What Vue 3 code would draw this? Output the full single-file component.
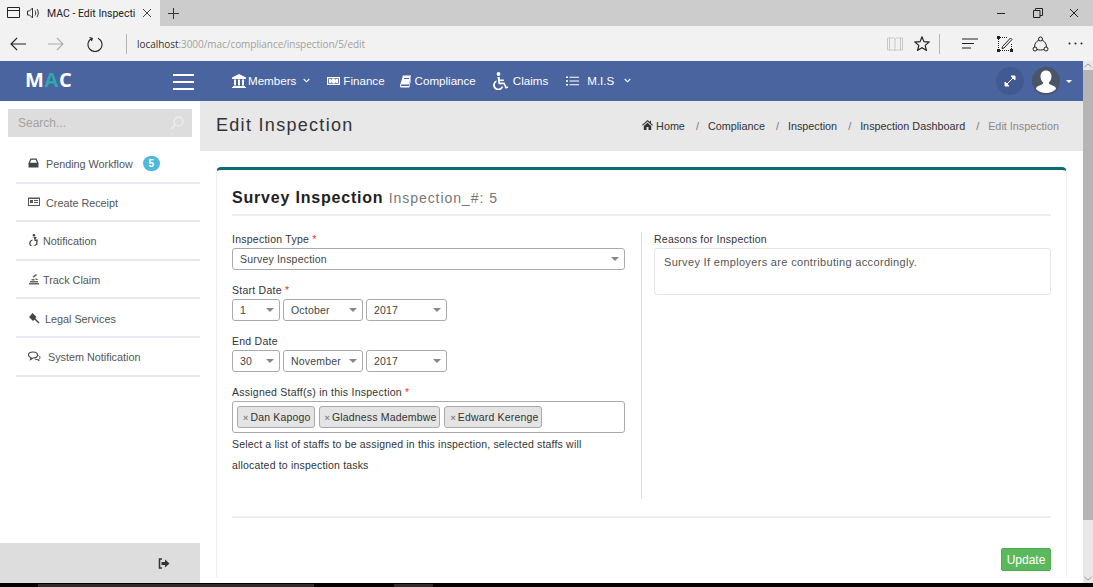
<template>
  <div class="screen">
    <div class="tabbar">
      <div class="tab">
        <svg class="tab-ico" width="16" height="14" viewBox="0 0 16 14"><path d="M1.5 1.5h12v10h-12zM1.5 4.5h12" fill="none" stroke="#222" stroke-width="1"/></svg>
        <svg class="tab-ico" width="15" height="14" viewBox="0 0 15 14"><path d="M1.5 5h2l3-3v10l-3-3h-2zM9 4.5c1 1.5 1 3.5 0 5M11 3c1.7 2.3 1.7 5.700 0 8" fill="none" stroke="#333" stroke-width="1"/></svg>
        <span class="tab-title">MAC - Edit Inspecti</span>
        <svg width="10" height="10" viewBox="0 0 10 10"><path d="M1 1l8 8M9 1l-8 8" stroke="#444" stroke-width="1"/></svg>
      </div>
      <svg class="plus" width="11" height="11" viewBox="0 0 11 11"><path d="M5.5 0v11M0 5.5h11" stroke="#333" stroke-width="1"/></svg>
      <div class="win-btns">
        <svg width="10" height="10" viewBox="0 0 10 10"><path d="M1 5.5h8" stroke="#222" stroke-width="1"/></svg>
        <svg width="10" height="10" viewBox="0 0 10 10"><path d="M.5 2.5h6.5v7h-6.5zM2.5 2.500v-2h7v7h-2.500" fill="none" stroke="#222" stroke-width="1"/></svg>
        <svg width="10" height="10" viewBox="0 0 10 10"><path d="M1 1l8 8M9 1l-8 8" stroke="#222" stroke-width="1"/></svg>
      </div>
    </div>

    <div class="toolbar">
      <svg class="tool back" width="16" height="14" viewBox="0 0 16 14"><path d="M7 1L1 7l6 6M1 7h15" fill="none" stroke="#222" stroke-width="1.100"/></svg>
      <svg class="tool fwd" width="16" height="14" viewBox="0 0 16 14"><path d="M9 1l6 6-6 6M15 7H0" fill="none" stroke="#aaa" stroke-width="1.100"/></svg>
      <svg class="tool reload" width="16" height="16" viewBox="0 0 16 16"><path d="M5 2.200A7 7 0 1 0 11 2.200M2.500 1.500L5.300 2.300 4.500 5" fill="none" stroke="#222" stroke-width="1.100"/></svg>
      <span class="tool-sep"></span>
      <div class="url"><b>localhost</b>:3000/mac/compliance/inspection/5/edit</div>
      <svg class="reader" width="16" height="14" viewBox="0 0 16 14"><path d="M.5 1h6l1.500 1 1.500-1h6v12h-6l-1.500 .5-1.500-.5h-6zM8 2v11M2.500 1v12M13.500 1v12" fill="none" stroke="#c8c8c8" stroke-width="1"/></svg>
      <svg class="star" width="16" height="15" viewBox="0 0 16 15"><path d="M8 1l2 4.700 5 .4-3.800 3.300 1.200 4.900L8 11.700l-4.400 2.600 1.200-4.900L1 6.100l5-.4z" fill="none" stroke="#222" stroke-width="1.200"/></svg>
      <span class="tool-sep right"></span>
      <svg class="hub" width="16" height="11" viewBox="0 0 16 11"><path d="M0 1h16M0 5.500h12M0 10h9" stroke="#222" stroke-width="1"/></svg>
      <svg class="note" width="16" height="16" viewBox="0 0 16 16"><path d="M3 1.500h8M3 14.500h10M1.500 3v10M14.500 8v5" fill="none" stroke="#222" stroke-width="1" stroke-dasharray="1 1"/><path d="M0 0h3v3H0zM0 13h3v3H0zM13 13h3v3h-3z" fill="#222"/><path d="M5.500 10.500l8-8.500 1.500 1.500-8 8.500-2 .5z" fill="#f2f2f2" stroke="#222" stroke-width="1"/></svg>
      <svg class="share" width="17" height="16" viewBox="0 0 17 16"><circle cx="8.500" cy="3" r="2" fill="none" stroke="#222"/><circle cx="3" cy="13" r="2" fill="none" stroke="#222"/><circle cx="14" cy="13" r="2" fill="none" stroke="#222"/><path d="M6.800 4.200C4 5.500 2.500 8 2.500 11M10.200 4.200c2.800 1.300 4.300 3.800 4.300 6.800M5 13.500c2 .7 5 .7 7 0" fill="none" stroke="#222"/></svg>
      <svg class="more" width="15" height="3" viewBox="0 0 15 3"><circle cx="1.500" cy="1.500" r="1" fill="#222"/><circle cx="7.500" cy="1.500" r="1" fill="#222"/><circle cx="13.500" cy="1.500" r="1" fill="#222"/></svg>
    </div>

    <div class="viewport">
      <div class="page">
        <header class="navbar">
          <div class="logo">M<span>A</span>C</div>
          <div class="burger"><i></i><i></i><i></i></div>
          <nav class="nav">
            <a v-for="item in navItems" :key="item.label" class="nav-item" :class="item.cls">
              <svg :width="item.w" :height="item.h || 14" :viewBox="`0 0 ${item.w} ${item.h || 14}`" v-html="item.icon"></svg>
              <span>{{ item.label }}</span>
              <svg v-if="item.caret" class="chev" width="7" height="5" viewBox="0 0 7 5"><path d="M.7 1l2.800 2.800L6.300 1" fill="none" stroke="#fff" stroke-width="1.100"/></svg>
            </a>
          </nav>
          <div class="nav-right">
            <div class="round expand">
              <svg width="12" height="12" viewBox="0 0 12 12"><path d="M7 1h4v4zM1 7v4h4zM9 3L3 9" fill="#fff" stroke="#fff" stroke-width="1"/></svg>
            </div>
            <div class="round avatar">
              <svg width="28" height="28" viewBox="0 0 28 28"><path d="M14 3.500c3.500 0 5.500 2.700 5.500 6 0 2.500-1.200 4.800-2.700 6 0 1.500 1 2 3.700 3 2.500 1 3.500 1.800 3.500 3.500-2.500 2.500-6 4-10 4s-7.500-1.500-10-4c0-1.700 1-2.500 3.500-3.500 2.700-1 3.700-1.500 3.700-3-1.500-1.200-2.700-3.500-2.700-6 0-3.300 2-6 5.500-6z" fill="#fff"/></svg>
            </div>
            <span class="caret-white"></span>
          </div>
        </header>

        <div class="body">
          <aside class="sidebar">
            <div class="search">
              <span>Search...</span>
              <svg width="14" height="14" viewBox="0 0 14 14"><circle cx="8.500" cy="5.500" r="4.500" fill="none" stroke="#f2f2f2" stroke-width="1.200"/><path d="M5.200 8.800L1 13" stroke="#f2f2f2" stroke-width="1.200"/></svg>
            </div>
            <ul class="menu">
              <li v-for="m in menu" :key="m.label" :style="{ gap: m.gap + 'px' }">
                <svg width="13" height="12" viewBox="0 0 13 12" v-html="m.icon"></svg>
                <span>{{ m.label }}</span>
                <em v-if="m.badge" class="badge">{{ m.badge }}</em>
              </li>
            </ul>
            <div class="side-foot">
              <svg width="12" height="11" viewBox="0 0 12 11"><path d="M4 1H1.500v9H4" fill="none" stroke="#333" stroke-width="1.500"/><path d="M3.500 4h3.500V1.500L11.500 5.500 7 9.500V7H3.500z" fill="#333"/></svg>
            </div>
          </aside>

          <main class="content">
            <div class="page-head">
              <h1>Edit Inspection</h1>
              <ol class="crumbs">
                <li>
                  <svg width="11" height="10" viewBox="0 0 11 10"><path d="M5.500 0L0 5l.7.700L5.500 1.500l4.800 4.200.7-.7-2-1.800V.7H8v1.300zM1.800 6L5.500 2.800 9.200 6v4H6.500V7h-2v3H1.800z" fill="#333"/></svg>
                  Home
                </li>
                <li v-for="c in crumbs" :key="c"><i>/</i>{{ c }}</li>
                <li class="active"><i>/</i>Edit Inspection</li>
              </ol>
            </div>

            <section class="card">
              <h2>Survey Inspection <small>Inspection_#: 5</small></h2>
              <div class="columns">
                <div class="col-left">
                  <div class="field">
                    <label>Inspection Type <b>*</b></label>
                    <div class="select wide">Survey Inspection</div>
                  </div>
                  <div v-for="d in dates" :key="d.label" class="field">
                    <label>{{ d.label }} <b v-if="d.required">*</b></label>
                    <div class="date-row">
                      <div class="select day">{{ d.day }}</div>
                      <div class="select month">{{ d.month }}</div>
                      <div class="select year">{{ d.year }}</div>
                    </div>
                  </div>
                  <div class="field staff">
                    <label>Assigned Staff(s) in this Inspection <b>*</b></label>
                    <div class="tags">
                      <span v-for="s in staff" :key="s" class="tag"><i>×</i>{{ s }}</span>
                    </div>
                    <p class="help">Select a list of staffs to be assigned in this inspection, selected staffs will allocated to inspection tasks</p>
                  </div>
                </div>
                <div class="col-right">
                  <label>Reasons for Inspection</label>
                  <div class="textarea">Survey If employers are contributing accordingly.</div>
                </div>
              </div>
              <div class="actions">
                <button type="button">Update</button>
              </div>
            </section>
          </main>
        </div>
      </div>

      <div class="scrollbar">
        <svg width="8" height="5" viewBox="0 0 8 5"><path d="M.5 4L4 1l3.500 3" fill="none" stroke="#999"/></svg>
        <div class="thumb"></div>
        <svg width="8" height="5" viewBox="0 0 8 5"><path d="M.5 1L4 4l3.500-3" fill="none" stroke="#999"/></svg>
      </div>
    </div>
    <div class="taskbar">
      <span class="task-a"></span>
      <span class="task-b"></span>
    </div>
  </div>
</template>

<script setup>
const navItems = [
  {
    label: 'Members', w: 14, caret: true, cls: 'members',
    icon: '<path d="M7 0l7 3.500V5H0V3.500zM1 12h12v1H1zM0 13h14v1H0zM2 5.500h2v6H2zM6 5.500h2v6H6zM10 5.500h2v6h-2z" fill="#fff"/>',
  },
  {
    label: 'Finance', w: 13, cls: 'finance',
    icon: '<path fill-rule="evenodd" d="M0 3h13v8H0zM1.200 4.200v5.600h10.600V4.200zM6.500 4.500a2.500 2.500 0 1 1 0 5 2.500 2.500 0 0 1 0-5zM2 5h2v4H2zM9 5h2v4H9z" fill="#fff"/>',
  },
  {
    label: 'Compliance', w: 11, cls: 'compliance',
    icon: '<path fill-rule="evenodd" d="M3 1.500h8L9 10.500H1.500c-.8 0-.9 1.500 0 1.500H9l1.500-7 .5 .5-1.700 8H1.500C.2 13.500-.3 12 .2 10.500zM4 4v1h5V4z" fill="#fff"/>',
  },
  {
    label: 'Claims', w: 16, h: 18, cls: 'claims',
    icon: '<circle cx="6.500" cy="2" r="1.900" fill="#fff"/><path d="M5.500 5h2.200l.2 2.500h4v1.500H8l.2 1.500h4.300l2 4.300 1.300-.5.600 1.300-2.800 1.100-2-4.500H6.500zM4.500 8.300v1.700a3.600 3.600 0 1 0 5.500 3.800l1 1.500A5.200 5.200 0 1 1 4.500 8.300z" fill="#fff"/>',
  },
  {
    label: 'M.I.S', w: 13, caret: true, cls: 'mis',
    icon: '<path d="M0 2.500h2v1.500H0zM0 6.250h2v1.500H0zM0 10h2v1.500H0zM3.500 2.800H13v1H3.500zM3.500 6.500H13v1H3.500zM3.500 10.300H13v1H3.500z" fill="#fff"/>',
  },
]

const menu = [
  {
    label: 'Pending Workflow', gap: 5, badge: 5,
    icon: '<path fill-rule="evenodd" d="M2.500 1.500h6l2 4.500v4.500H.5V6zM3.300 2.800L2 5.800h7L7.700 2.800z" fill="#444"/>',
  },
  {
    label: 'Create Receipt', gap: 5,
    icon: '<path fill-rule="evenodd" d="M0 1.500h12v8.500H0zM1 3v6h10V3zM2 4h3v3H2zM6 4h4v1H6zM6 6h4v1H6z" fill="#555"/>',
  },
  {
    label: 'Notification', gap: 2,
    icon: '<circle cx="6" cy="1.300" r="1.300" fill="#444"/><path d="M3.500 3h5v1L7 5.500h2.800L9.300 11H8l.3-4H6.500L6 3.500zM4.500 5.500v1.300a2.600 2.600 0 1 0 3 3.200l.7.800A3.700 3.700 0 1 1 4.500 5.500z" fill="#444"/>',
  },
  {
    label: 'Track Claim', gap: 2,
    icon: '<path d="M1 10h10v1.500H1zM2 8h8v1.500H2zM3.500 6h3v1.500h-3zM4.500 3.500L8 1l1 1.200-3.500 2.600zM7.500 5l3 2h-3z" fill="#666"/>',
  },
  {
    label: 'Legal Services', gap: 4,
    icon: '<path d="M4.500 1L8.500 5 7 6.500 3 2.500zM1 5l3-3 4 4-3 3zM7 6l4.500 4.500-1 1L6 7z" fill="#444"/>',
  },
  {
    label: 'System Notification', gap: 7,
    icon: '<path d="M5 2c2.500 0 4.500 1.300 4.500 3S7.500 8 5 8L2.500 9.500l.5-2C1.500 7 .5 6 .5 5 .5 3.300 2.500 2 5 2z" fill="none" stroke="#444" stroke-width="1.100"/><path d="M10.500 5.500c1 .5 1.500 1.200 1.500 2 0 .8-.5 1.500-1.300 1.900l.4 1.300-2-1.200c-1 0-1.800-.2-2.400-.6" fill="none" stroke="#444" stroke-width="1"/>',
  },
]

const crumbs = ['Compliance', 'Inspection', 'Inspection Dashboard']

const dates = [
  { label: 'Start Date', required: true, day: '1', month: 'October', year: '2017' },
  { label: 'End Date', required: false, day: '30', month: 'November', year: '2017' },
]

const staff = ['Dan Kapogo', 'Gladness Madembwe', 'Edward Kerenge']
</script>

<style>
html, body { margin: 0; overflow: hidden; background: #fff; }
</style>

<style scoped>
.screen {
  width: 1093px;
  height: 587px;
  display: flex;
  flex-direction: column;
  overflow: hidden;
  font-family: "Liberation Sans", Arial, sans-serif;
  font-size: 11px;
  color: #333;
}

/* browser chrome */
.tabbar {
  height: 26px;
  flex: none;
  background: #cccccc;
  display: flex;
  align-items: center;
}
.tab {
  width: 160px;
  height: 26px;
  background: #f2f2f2;
  display: flex;
  align-items: center;
  padding-left: 6px;
  box-sizing: border-box;
}
.tab-ico { margin-right: 4px; flex: none; }
.tab-title {
  font-family: Roboto, sans-serif;
  font-size: 10.500px;
  color: #222;
  width: 89px;
  margin: 0 6px 0 2px;
  white-space: nowrap;
}
.plus { margin-left: 8px; }
.win-btns {
  margin-left: auto;
  display: flex;
  gap: 26.500px;
  padding-right: 14px;
}
.toolbar {
  height: 35px;
  flex: none;
  background: #f2f2f2;
  display: flex;
  align-items: center;
}
.back { margin-left: 10px; }
.fwd { margin-left: 22px; }
.reload { margin-left: 23px; }
.tool-sep {
  width: 1px;
  height: 20px;
  background: #b4b4b4;
  margin-left: 23px;
}
.url {
  margin-left: 10px;
  font-family: "Open Sans", sans-serif;
  font-size: 10px;
  letter-spacing: -0.05px;
  color: #a0a0a0;
}
.url b { font-weight: 400; color: #333; }
.reader { margin-left: auto; }
.star { margin-left: 11px; }
.tool-sep.right { margin-left: 9px; }
.hub { margin-left: 22px; }
.note { margin-left: 19px; }
.share { margin-left: 19px; }
.more { margin-left: 19px; margin-right: 10px; }

.viewport {
  height: 522px;
  flex: none;
  display: flex;
}
.page {
  width: 1083px;
  display: flex;
  flex-direction: column;
}
.scrollbar {
  width: 10px;
  background: #e8e8e8;
  display: flex;
  flex-direction: column;
  align-items: center;
}
.scrollbar svg { flex: none; margin: 2px 0; }
.thumb {
  width: 10px;
  height: 451px;
  background: #b5b5b5;
  margin-bottom: 54px;
}
.taskbar {
  flex: 1;
  background: #000;
  display: flex;
  padding-top: 1px;
}
.task-a {
  width: 276px;
  margin-left: 38px;
  background: #2d2d2d;
}
.task-b {
  width: 39px;
  margin-left: 80px;
  background: #2d2d2d;
}

/* navbar */
.navbar {
  height: 40px;
  flex: none;
  background: #4a64a0;
  display: flex;
  align-items: center;
  color: #fff;
}
.logo {
  font-family: "Open Sans", sans-serif;
  font-size: 20px;
  font-weight: 700;
  letter-spacing: 0.6px;
  width: 148px;
  padding-left: 25px;
  margin-top: -4px;
  box-sizing: border-box;
}
.logo span { color: #2fa8b0; }
.burger {
  width: 21px;
  display: flex;
  flex-direction: column;
  gap: 5px;
  margin-left: 25px;
  margin-top: 1px;
}
.burger i { display: block; height: 2px; background: #fff; }
.nav {
  display: flex;
  align-items: center;
  margin-left: 38px;
  margin-top: -1px;
  font-size: 11.600px;
}
.nav-item {
  display: flex;
  align-items: center;
  white-space: nowrap;
}
.nav-item.members { gap: 2px; margin-right: 17.500px; }
.nav-item.finance { gap: 3px; margin-right: 15px; }
.nav-item.compliance { gap: 4px; margin-right: 16px; }
.nav-item.claims { gap: 5px; margin-right: 18px; }
.nav-item.mis { gap: 8px; }
.chev { margin-left: 4.500px; }
.mis .chev { margin-left: 2px; }
.nav-right {
  margin-left: auto;
  display: flex;
  align-items: center;
  padding-right: 11px;
}
.round {
  width: 28px;
  height: 28px;
  border-radius: 50%;
  display: flex;
  align-items: center;
  justify-content: center;
  overflow: hidden;
  margin-top: -1px;
}
.expand { background: #415a91; margin-right: 8px; }
.avatar { background: #4a5568; }
.caret-white {
  margin-left: 6px;
  border-left: 3.500px solid transparent;
  border-right: 3.500px solid transparent;
  border-top: 3.500px solid #fff;
}

/* sidebar */
.body {
  flex: 1;
  display: flex;
  min-height: 0;
}
.sidebar {
  width: 200px;
  flex: none;
  background: #fff;
  display: flex;
  flex-direction: column;
}
.search {
  height: 28px;
  margin: 8px 8px 8px;
  background: #dddddd;
  display: flex;
  align-items: center;
  justify-content: space-between;
  padding: 0 8px 0 10px;
  font-size: 12px;
  color: #a3a3a3;
}
.menu {
  list-style: none;
  margin: 0 0 0 16px;
  padding: 0;
}
.menu li {
  height: 36.600px;
  box-sizing: content-box;
  border-bottom: 2px solid #e8e8ee;
  display: flex;
  align-items: center;
  padding-left: 12px;
  font-size: 10.800px;
  color: #555;
}
.menu li span { position: relative; top: 1px; }
.menu li svg { flex: none; }
.badge {
  font-style: normal;
  font-weight: 700;
  font-size: 10px;
  color: #fff;
  background: #4fb8dc;
  border-radius: 8px;
  width: 17px;
  height: 15px;
  line-height: 15px;
  text-align: center;
  margin-left: 5px;
}
.side-foot {
  margin-top: auto;
  height: 40px;
  background: #dddddd;
  display: flex;
  align-items: center;
  justify-content: flex-end;
  padding-right: 30px;
}

/* content */
.content {
  flex: 1;
  min-width: 0;
  background: #fff;
  overflow: hidden;
}
.page-head {
  height: 50px;
  background: #e8e8e8;
  display: flex;
  align-items: center;
  justify-content: space-between;
  padding: 0 24px 0 16px;
}
h1 {
  margin: 0 0 2px;
  font-size: 18px;
  font-weight: 400;
  letter-spacing: 1.300px;
  color: #333;
}
.crumbs {
  list-style: none;
  margin: 0;
  padding: 0;
  display: flex;
  font-size: 10.800px;
  color: #333;
}
.crumbs li { white-space: nowrap; }
.crumbs i { font-style: normal; color: #777; margin: 0 9px 0 11px; }
.crumbs .active { color: #888; }
.card {
  margin: 16px 16px 0;
  padding: 18px 15px 16px;
  height: 410px;
  box-sizing: border-box;
  background: #fff;
  border-top: 3px solid #0c6a74;
  border-left: 1px solid #eee;
  border-right: 1px solid #eee;
  border-radius: 5px 5px 0 0;
}
h2 {
  margin: 0;
  padding-bottom: 6px;
  border-bottom: 2px solid #eeeeee;
  font-size: 16px;
  line-height: 19px;
  letter-spacing: 0.8px;
  color: #222;
}
h2 small {
  font-size: 14px;
  font-weight: 400;
  color: #777;
  letter-spacing: 0.95px;
}
.columns {
  display: flex;
  margin-top: 16px;
}
.col-left {
  width: 393px;
  height: 267px;
  padding-right: 16px;
  border-right: 1px solid #ddd;
  flex: none;
}
.col-right {
  flex: 1;
  padding-left: 12px;
}
label {
  display: block;
  font-size: 10.500px;
  line-height: 14px;
  letter-spacing: 0.25px;
  color: #333;
  margin-bottom: 2px;
}
label b { color: #e33; font-weight: 400; }
.field { margin-bottom: 13px; }
.select {
  position: relative;
  height: 20px;
  line-height: 20px;
  padding-left: 7px;
  border: 1px solid #aaa;
  border-radius: 3px;
  color: #444;
  font-size: 10.500px;
  letter-spacing: 0.2px;
  background: #fff;
}
.select::after {
  content: "";
  position: absolute;
  right: 3px;
  top: 8px;
  border-left: 4px solid transparent;
  border-right: 4px solid transparent;
  border-top: 4px solid #888;
  margin-right: 2px;
}
.wide { width: 384px; }
.date-row {
  display: flex;
  gap: 3px;
}
.day { width: 39px; }
.month { width: 71px; }
.year { width: 72px; }
.tags {
  height: 30px;
  border: 1px solid #aaa;
  border-radius: 3px;
  display: flex;
  align-items: center;
  gap: 4px;
  padding-left: 4px;
  width: 387px;
}
.tag {
  height: 20px;
  line-height: 20px;
  padding: 0 3px 0 5px;
  background: #e4e4e4;
  border: 1px solid #aaa;
  border-radius: 3px;
  font-size: 10.500px;
  letter-spacing: 0.17px;
  color: #333;
  white-space: nowrap;
}
.tag i {
  font-style: normal;
  color: #888;
  font-weight: 700;
  margin-right: 2px;
  font-size: 9px;
}
.help {
  margin: 1px 0 0;
  font-size: 10.500px;
  line-height: 21px;
  letter-spacing: 0.18px;
  width: 370px;
  color: #333;
}
.textarea {
  height: 36px;
  padding: 7px 10px 2px 9px;
  border: 1px solid #e5e5e5;
  border-radius: 3px;
  font-size: 11px;
  color: #555;
  letter-spacing: 0.33px;
}
.actions {
  border-top: 2px solid #eeeeee;
  margin-top: 17px;
  padding-top: 30px;
  display: flex;
  justify-content: flex-end;
}
button {
  width: 50px;
  height: 23px;
  padding: 0;
  border: 1px solid #4cae4c;
  border-radius: 2px;
  background: #5cb85c;
  color: #fff;
  font-family: "Liberation Sans", Arial, sans-serif;
  font-size: 12px;
}
</style>
